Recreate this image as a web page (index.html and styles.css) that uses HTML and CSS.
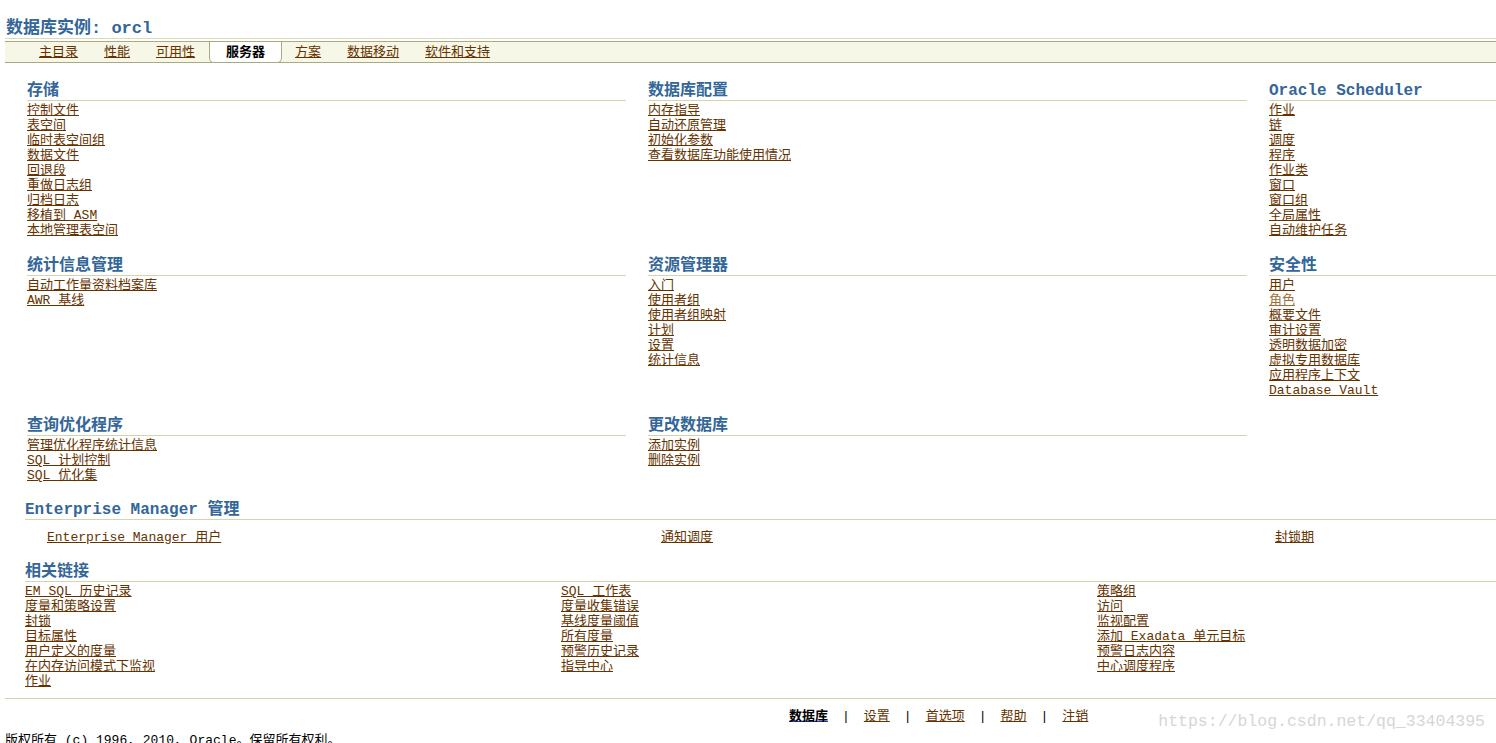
FILE: index.html
```html
<!DOCTYPE html>
<html lang="zh-CN">
<head>
    <meta charset="UTF-8">
    <title>数据库实例: orcl</title>
    <link rel="stylesheet" href="styles.css">
</head>
<body>
    <h1 class="page-title">数据库实例: orcl</h1>

    <div class="tabbar">
        <div class="tabs">
            <a class="tab" href="#">主目录</a>
            <a class="tab" href="#">性能</a>
            <a class="tab" href="#">可用性</a>
            <span class="tab active">服务器</span>
            <a class="tab" href="#">方案</a>
            <a class="tab" href="#">数据移动</a>
            <a class="tab" href="#">软件和支持</a>
        </div>
    </div>

    <div class="admin-grid">
        <div class="section">
            <h2 class="section-title">存储</h2>
            <ul class="links">
                <li><a href="#">控制文件</a></li>
                <li><a href="#">表空间</a></li>
                <li><a href="#">临时表空间组</a></li>
                <li><a href="#">数据文件</a></li>
                <li><a href="#">回退段</a></li>
                <li><a href="#">重做日志组</a></li>
                <li><a href="#">归档日志</a></li>
                <li><a href="#">移植到 ASM</a></li>
                <li><a href="#">本地管理表空间</a></li>
            </ul>
        </div>
        <div class="section">
            <h2 class="section-title">数据库配置</h2>
            <ul class="links">
                <li><a href="#">内存指导</a></li>
                <li><a href="#">自动还原管理</a></li>
                <li><a href="#">初始化参数</a></li>
                <li><a href="#">查看数据库功能使用情况</a></li>
            </ul>
        </div>
        <div class="section">
            <h2 class="section-title">Oracle Scheduler</h2>
            <ul class="links">
                <li><a href="#">作业</a></li>
                <li><a href="#">链</a></li>
                <li><a href="#">调度</a></li>
                <li><a href="#">程序</a></li>
                <li><a href="#">作业类</a></li>
                <li><a href="#">窗口</a></li>
                <li><a href="#">窗口组</a></li>
                <li><a href="#">全局属性</a></li>
                <li><a href="#">自动维护任务</a></li>
            </ul>
        </div>

        <div class="section">
            <h2 class="section-title">统计信息管理</h2>
            <ul class="links">
                <li><a href="#">自动工作量资料档案库</a></li>
                <li><a href="#">AWR 基线</a></li>
            </ul>
        </div>
        <div class="section">
            <h2 class="section-title">资源管理器</h2>
            <ul class="links">
                <li><a href="#">入门</a></li>
                <li><a href="#">使用者组</a></li>
                <li><a href="#">使用者组映射</a></li>
                <li><a href="#">计划</a></li>
                <li><a href="#">设置</a></li>
                <li><a href="#">统计信息</a></li>
            </ul>
        </div>
        <div class="section">
            <h2 class="section-title">安全性</h2>
            <ul class="links">
                <li><a href="#">用户</a></li>
                <li><a class="visited" href="#">角色</a></li>
                <li><a href="#">概要文件</a></li>
                <li><a href="#">审计设置</a></li>
                <li><a href="#">透明数据加密</a></li>
                <li><a href="#">虚拟专用数据库</a></li>
                <li><a href="#">应用程序上下文</a></li>
                <li><a href="#">Database Vault</a></li>
            </ul>
        </div>

        <div class="section">
            <h2 class="section-title">查询优化程序</h2>
            <ul class="links">
                <li><a href="#">管理优化程序统计信息</a></li>
                <li><a href="#">SQL 计划控制</a></li>
                <li><a href="#">SQL 优化集</a></li>
            </ul>
        </div>
        <div class="section">
            <h2 class="section-title">更改数据库</h2>
            <ul class="links">
                <li><a href="#">添加实例</a></li>
                <li><a href="#">删除实例</a></li>
            </ul>
        </div>
    </div>

    <div class="block">
        <h2 class="block-title">Enterprise Manager 管理</h2>
        <div class="em-links">
            <a href="#">Enterprise Manager 用户</a>
            <a href="#">通知调度</a>
            <a href="#">封锁期</a>
        </div>
    </div>

    <div class="block related">
        <h2 class="block-title">相关链接</h2>
        <div class="related-grid">
            <ul class="links">
                <li><a href="#">EM SQL 历史记录</a></li>
                <li><a href="#">度量和策略设置</a></li>
                <li><a href="#">封锁</a></li>
                <li><a href="#">目标属性</a></li>
                <li><a href="#">用户定义的度量</a></li>
                <li><a href="#">在内存访问模式下监视</a></li>
                <li><a href="#">作业</a></li>
            </ul>
            <ul class="links">
                <li><a href="#">SQL 工作表</a></li>
                <li><a href="#">度量收集错误</a></li>
                <li><a href="#">基线度量阈值</a></li>
                <li><a href="#">所有度量</a></li>
                <li><a href="#">预警历史记录</a></li>
                <li><a href="#">指导中心</a></li>
            </ul>
            <ul class="links">
                <li><a href="#">策略组</a></li>
                <li><a href="#">访问</a></li>
                <li><a href="#">监视配置</a></li>
                <li><a href="#">添加 Exadata 单元目标</a></li>
                <li><a href="#">预警日志内容</a></li>
                <li><a href="#">中心调度程序</a></li>
            </ul>
        </div>
    </div>

    <div class="footer">
        <div class="footer-nav">
            <a class="current" href="#">数据库</a>
            <span class="sep">|</span>
            <a href="#">设置</a>
            <span class="sep">|</span>
            <a href="#">首选项</a>
            <span class="sep">|</span>
            <a href="#">帮助</a>
            <span class="sep">|</span>
            <a href="#">注销</a>
        </div>
        <p class="copyright">版权所有 (c) 1996, 2010, Oracle。保留所有权利。</p>
        <div class="watermark">https://blog.csdn.net/qq_33404395</div>
    </div>
</body>
</html>
```

FILE: styles.css
```css
* {
    margin: 0;
    padding: 0;
    box-sizing: border-box;
}

body {
    font-family: "Liberation Mono", "Noto Sans CJK SC", monospace;
    font-size: 13px;
    line-height: 15px;
    color: #000;
    background-color: #fff;
    padding-left: 5px;
    overflow: hidden;
}

a {
    color: #663300;
    text-decoration: underline;
}

a.visited {
    color: #a0703c;
}

.page-title {
    font-size: 17px;
    line-height: 18px;
    font-weight: bold;
    color: #336699;
    padding: 20px 0 0 1px;
}

/* tab strip */
.tabbar {
    border-top: 1px solid #d9dcb6;
    padding-top: 2px;
}

.tabs {
    display: flex;
    height: 22px;
    padding-left: 21px;
    background-color: #f7f7e7;
    border-top: 1px solid #a9aa84;
    border-bottom: 1px solid #a9aa84;
}

.tab {
    padding: 1px 13px 0;
    line-height: 20px;
}

.tab.active {
    padding: 1px 16px 0;
    margin-left: 1px;
    height: 21px;
    font-weight: bold;
    color: #000;
    background-color: #fff;
    border: 1px solid #a9aa84;
    border-top: none;
    border-radius: 0 0 5px 5px;
}

/* main sections */
.admin-grid {
    display: grid;
    grid-template-columns: 599px 599px 1fr;
    column-gap: 22px;
    row-gap: 18px;
    margin-top: 18px;
    padding-left: 22px;
}

.section-title,
.block-title {
    font-size: 16px;
    line-height: 17px;
    padding-top: 2px;
    font-weight: bold;
    color: #336699;
    border-bottom: 1px solid #d4d5b0;
    margin-bottom: 2px;
}

.links {
    list-style: none;
}

.links li {
    line-height: 15px;
}

.block {
    margin-top: 18px;
    padding-left: 20px;
}

.block-title {
    line-height: 18px;
    padding-top: 0;
}

.em-links {
    display: grid;
    grid-template-columns: 614px 614px 1fr;
    margin-top: 10px;
    padding-left: 22px;
}

.related {
    margin-top: 16px;
}

.related .block-title {
    padding-top: 2px;
}

.related-grid {
    display: grid;
    grid-template-columns: 536px 536px 1fr;
}

/* footer */
.footer {
    position: relative;
    margin-top: 9px;
    border-top: 1px solid #d4d5b0;
    padding-top: 10px;
}

.footer-nav {
    display: flex;
    padding-left: 784px;
}

.footer-nav .current {
    color: #000;
    font-weight: bold;
    text-decoration-color: #2233cc;
}

.sep {
    margin: 0 14px;
}

.copyright {
    margin-top: 9px;
}

.watermark {
    position: absolute;
    top: 13px;
    right: 11px;
    font-family: "Liberation Mono", monospace;
    font-size: 16.5px;
    line-height: 20px;
    color: #d6d6d6;
}
```
